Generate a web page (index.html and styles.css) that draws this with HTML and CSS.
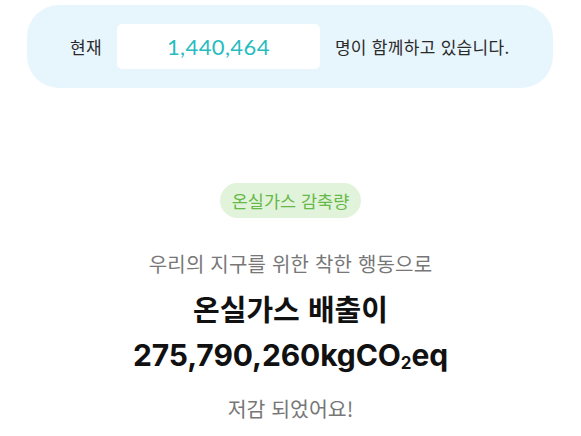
FILE: index.html
```html
<!DOCTYPE html>
<html lang="ko">
<head>
<meta charset="utf-8">
<link rel="stylesheet" href="styles.css">
</head>
<body>
<section class="card">
  <span class="label">현재</span>
  <div class="count">1,440,464</div>
  <span class="label">명이 함께하고 있습니다.</span>
</section>
<main class="result">
  <div class="badge">온실가스 감축량</div>
  <p class="sub">우리의 지구를 위한 착한 행동으로</p>
  <h1 class="title">온실가스 배출이<br><span class="num">275,790,260kgCO<sub>2</sub>eq</span></h1>
  <p class="done">저감 되었어요!</p>
</main>
</body>
</html>
```

FILE: styles.css
```css
html, body {
  margin: 0;
  padding: 0;
  background: #ffffff;
  font-family: "Noto Sans CJK KR", "Noto Sans", sans-serif;
}
.card {
  margin: 5px 28px 0 27px;
  height: 83px;
  box-sizing: border-box;
  background: #e7f5fc;
  border-radius: 32px;
  display: flex;
  align-items: center;
  padding: 0 0 0 43px;
}
.label {
  font-size: 17px;
  color: #2a2a2a;
  letter-spacing: 0.3px;
}
.count {
  margin: 0 15px 0 15px;
  width: 203px;
  height: 45px;
  background: #fff;
  border-radius: 5px;
  display: flex;
  align-items: center;
  justify-content: center;
  font-family: "Lato", sans-serif;
  font-size: 22px;
  color: #28bcc0;
  letter-spacing: 0.4px;
}
.result {
  display: flex;
  flex-direction: column;
  align-items: center;
  padding-top: 95px;
}
.badge {
  height: 35px;
  padding: 0 12px;
  border-radius: 18px;
  background: #e2f3db;
  color: #66b847;
  font-size: 17.5px;
  display: flex;
  align-items: center;
}
.sub {
  margin: 32px 0 0;
  font-size: 20px;
  color: #777;
  line-height: 28px;
  letter-spacing: 0.2px;
}
.title {
  margin: 8px 0 0;
  text-align: center;
  font-size: 29px;
  font-weight: 700;
  color: #111;
  line-height: 45px;
}
.num {
  font-family: "Inter", sans-serif;
  font-size: 30px;
  letter-spacing: -0.1px;
}
.title sub {
  font-size: 17px;
  vertical-align: -3px;
  line-height: 0;
}
.done {
  margin: 16px 0 0;
  font-size: 20.5px;
  color: #777;
  line-height: 28px;
}
```
